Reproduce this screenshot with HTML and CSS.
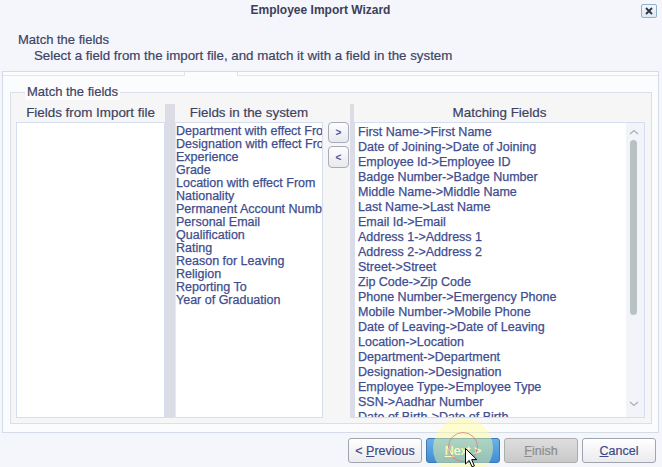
FILE: index.html
```html
<!DOCTYPE html>
<html>
<head>
<meta charset="utf-8">
<link rel="stylesheet" href="styles.css">
</head>
<body>
<div class="window">
  <div class="titlebar">
    <div class="title">Employee Import Wizard</div>
    <button class="close"><svg width="8" height="8" viewBox="0 0 8 8"><path d="M1 1L7 7M7 1L1 7" stroke="#2d3440" stroke-width="1.8"/></svg></button>
  </div>
  <div class="intro">
    <div class="intro-title">Match the fields</div>
    <div class="intro-sub">Select a field from the import file, and match it with a field in the system</div>
  </div>
  <div class="panel">
    <div class="tabstrip"><span class="tab"></span></div>
    <fieldset class="group">
      <legend>Match the fields</legend>
      <div class="cols">
        <div class="col col-import">
          <div class="col-head">Fields from Import file</div>
          <div class="listbox"></div>
        </div>
        <div class="splitter splitter-wide"></div>
        <div class="col col-system">
          <div class="col-head">Fields in the system</div>
          <div class="listbox list-system">
            <div class="sys-item">Department with effect From</div>
            <div class="sys-item">Designation with effect From</div>
            <div class="sys-item">Experience</div>
            <div class="sys-item">Grade</div>
            <div class="sys-item">Location with effect From</div>
            <div class="sys-item">Nationality</div>
            <div class="sys-item">Permanent Account Number</div>
            <div class="sys-item">Personal Email</div>
            <div class="sys-item">Qualification</div>
            <div class="sys-item">Rating</div>
            <div class="sys-item">Reason for Leaving</div>
            <div class="sys-item">Religion</div>
            <div class="sys-item">Reporting To</div>
            <div class="sys-item">Year of Graduation</div>
          </div>
        </div>
        <div class="movebtns">
          <button class="move move-add">&gt;</button>
          <button class="move move-remove">&lt;</button>
        </div>
        <div class="splitter splitter-narrow"></div>
        <div class="col col-match">
          <div class="col-head">Matching Fields</div>
          <div class="listbox list-match">
            <div class="match-items">
              <div class="match-item">First Name-&gt;First Name</div>
              <div class="match-item">Date of Joining-&gt;Date of Joining</div>
              <div class="match-item">Employee Id-&gt;Employee ID</div>
              <div class="match-item">Badge Number-&gt;Badge Number</div>
              <div class="match-item">Middle Name-&gt;Middle Name</div>
              <div class="match-item">Last Name-&gt;Last Name</div>
              <div class="match-item">Email Id-&gt;Email</div>
              <div class="match-item">Address 1-&gt;Address 1</div>
              <div class="match-item">Address 2-&gt;Address 2</div>
              <div class="match-item">Street-&gt;Street</div>
              <div class="match-item">Zip Code-&gt;Zip Code</div>
              <div class="match-item">Phone Number-&gt;Emergency Phone</div>
              <div class="match-item">Mobile Number-&gt;Mobile Phone</div>
              <div class="match-item">Date of Leaving-&gt;Date of Leaving</div>
              <div class="match-item">Location-&gt;Location</div>
              <div class="match-item">Department-&gt;Department</div>
              <div class="match-item">Designation-&gt;Designation</div>
              <div class="match-item">Employee Type-&gt;Employee Type</div>
              <div class="match-item">SSN-&gt;Aadhar Number</div>
              <div class="match-item">Date of Birth-&gt;Date of Birth</div>
              <div class="match-item">Gender-&gt;Gender</div>
              <div class="match-item">Marital Status-&gt;Marital Status</div>
            </div>
            <div class="scrollbar">
              <svg class="arrow arrow-up" width="10" height="6" viewBox="0 0 10 6"><path d="M1 5L5 1.5L9 5" fill="none" stroke="#a9b0b8" stroke-width="1.3"/></svg>
              <div class="thumb"></div>
              <svg class="arrow arrow-down" width="10" height="6" viewBox="0 0 10 6"><path d="M1 1L5 4.5L9 1" fill="none" stroke="#a9b0b8" stroke-width="1.3"/></svg>
            </div>
          </div>
        </div>
      </div>
    </fieldset>
  </div>
  <div class="footer">
    <button class="btn">&lt; <u>P</u>revious</button>
    <button class="btn btn-primary"><u>N</u>ext &gt;</button>
    <button class="btn btn-disabled"><u>F</u>inish</button>
    <button class="btn"><u>C</u>ancel</button>
  </div>
  <div class="halo"></div>
  <div class="ring"></div>
  <svg class="cursor" width="13" height="20" viewBox="0 0 13 20"><path d="M0.5 0.5L0.5 16L4.2 12.4L7 18.8L9.4 17.8L6.7 11.6L11.8 11.6Z" fill="#fff" stroke="#000" stroke-width="1"/></svg>
</div>
</body>
</html>
```
FILE: styles.css
```css
* { box-sizing: border-box; }
html, body { margin: 0; padding: 0; }
body {
  width: 662px;
  height: 467px;
  overflow: hidden;
  background: #f5f6fc;
  font-family: "Liberation Sans", Arial, sans-serif;
  color: #3d4466;
}
.window {
  position: relative;
  width: 662px;
  height: 467px;
}
.titlebar {
  display: flex;
  align-items: flex-start;
  height: 21px;
}
.title {
  flex: 1;
  text-align: center;
  font-weight: bold;
  font-size: 12px;
  line-height: 21px;
  color: #3c4058;
}
.close {
  margin: 4px 5px 0 0;
  width: 16px;
  height: 14px;
  padding: 0;
  border: 1px solid #8fb1cc;
  border-radius: 2px;
  background: linear-gradient(#f4f8fc, #dfe8f2);
  display: flex;
  align-items: center;
  justify-content: center;
}
.intro {
  padding-top: 11px;
  padding-left: 18px;
}
.intro-title {
  font-size: 13px;
  line-height: 16px;
  color: #3d4466;
  -webkit-text-stroke: 0.2px currentColor;
}
.intro-sub {
  font-size: 13.3px;
  line-height: 16px;
  padding-left: 16px;
  color: #3d4466;
  -webkit-text-stroke: 0.2px currentColor;
}
.panel {
  margin: 7px 3px 0 2px;
  height: 362px;
  border: 1px solid #d5dbe7;
  background: #fbfcfe;
}
.tabstrip {
  height: 4px;
  border-bottom: 1px solid #e3e7ef;
  padding-left: 181px;
}
.tab {
  display: block;
  width: 54px;
  height: 4px;
  border-left: 1px solid #e0e4ec;
  border-right: 1px solid #e0e4ec;
  background: #fdfdfe;
}
.group {
  margin: 8px 6px 8px 7px;
  padding: 4px 6px 5px 5px;
  border: 1px solid #dadfea;
  background: #f6f6f7;
  min-width: 0;
}
.group legend {
  margin-left: 9px;
  padding: 0 2px;
  font-size: 13px;
  line-height: 16px;
  background: #fcfcfd;
  color: #3d4466;
  -webkit-text-stroke: 0.2px currentColor;
}
.cols {
  display: flex;
  height: 314px;
}
.col {
  display: flex;
  flex-direction: column;
}
.col-import { width: 149px; }
.col-system { width: 148px; }
.col-match { width: 291px; }
.col-head {
  height: 18px;
  line-height: 18px;
  font-size: 13.4px;
  text-align: center;
  color: #3d4262;
  white-space: nowrap;
  -webkit-text-stroke: 0.2px currentColor;
}
.listbox {
  flex: 1;
  border: 1px solid #d4deee;
  background: #ffffff;
  overflow: hidden;
}
.splitter { background: #dcdce6; }
.splitter-wide { width: 10px; }
.splitter-narrow { width: 4px; margin-left: 1px; }
.list-system {
  padding-top: 2px;
  border-left-color: #e6e9f2;
}
.sys-item {
  height: 13px;
  line-height: 13px;
  font-size: 12.5px;
  white-space: nowrap;
  overflow: hidden;
  color: #404d8e;
  -webkit-text-stroke: 0.25px currentColor;
}
.movebtns {
  width: 21px;
  margin-left: 5px;
  padding-top: 18px;
  display: flex;
  flex-direction: column;
  gap: 3px;
}
.move {
  width: 21px;
  height: 21px;
  padding: 0;
  border: 1px solid #a9acb8;
  border-radius: 4px;
  background: linear-gradient(#fdfdfd, #e8e9ee);
  font-family: "Liberation Sans", Arial, sans-serif;
  font-size: 10px;
  font-weight: bold;
  color: #4b5896;
}
.move-remove { height: 22px; }
.list-match {
  display: flex;
}
.match-items {
  flex: 1;
  padding: 2px 0 0 3px;
  overflow: hidden;
}
.match-item {
  height: 15px;
  line-height: 15px;
  font-size: 12.5px;
  white-space: nowrap;
  color: #404d8e;
  -webkit-text-stroke: 0.25px currentColor;
}
.scrollbar {
  width: 18px;
  background: #f2f4fa;
  display: flex;
  flex-direction: column;
  align-items: flex-start;
}
.arrow { margin-left: 3px; }
.arrow-up { margin-top: 6px; }
.thumb {
  margin: 5px 0 0 4px;
  width: 7px;
  height: 175px;
  border-radius: 4px;
  background: #b9c2c3;
}
.arrow-down { margin-top: 86px; }
.footer {
  display: flex;
  justify-content: flex-end;
  gap: 4px;
  padding: 5px 6px 0 0;
}
.btn {
  width: 74px;
  height: 25px;
  padding: 0;
  border: 1px solid #9fa4ae;
  border-radius: 3px;
  background: linear-gradient(#ffffff, #ebebee);
  font-family: "Liberation Sans", Arial, sans-serif;
  font-size: 12.5px;
  color: #3e4a88;
  -webkit-text-stroke: 0.2px currentColor;
}
.btn-primary {
  border-color: #3a78b8;
  background: linear-gradient(#6cb2e8, #3f8dd4);
  color: #fffbd0;
}
.btn-disabled {
  border-color: #adadad;
  background: linear-gradient(#dedede, #c9c9c9);
  color: #8c8c8c;
}
.halo {
  position: absolute;
  left: 433px;
  top: 418px;
  width: 60px;
  height: 60px;
  border-radius: 50%;
  background: rgba(255, 255, 150, 0.45);
  pointer-events: none;
}
.ring {
  position: absolute;
  left: 448px;
  top: 432px;
  width: 30px;
  height: 30px;
  border-radius: 50%;
  border: 1px solid rgba(225, 110, 100, 0.7);
  pointer-events: none;
}
.cursor {
  position: absolute;
  left: 465px;
  top: 448px;
}
```
